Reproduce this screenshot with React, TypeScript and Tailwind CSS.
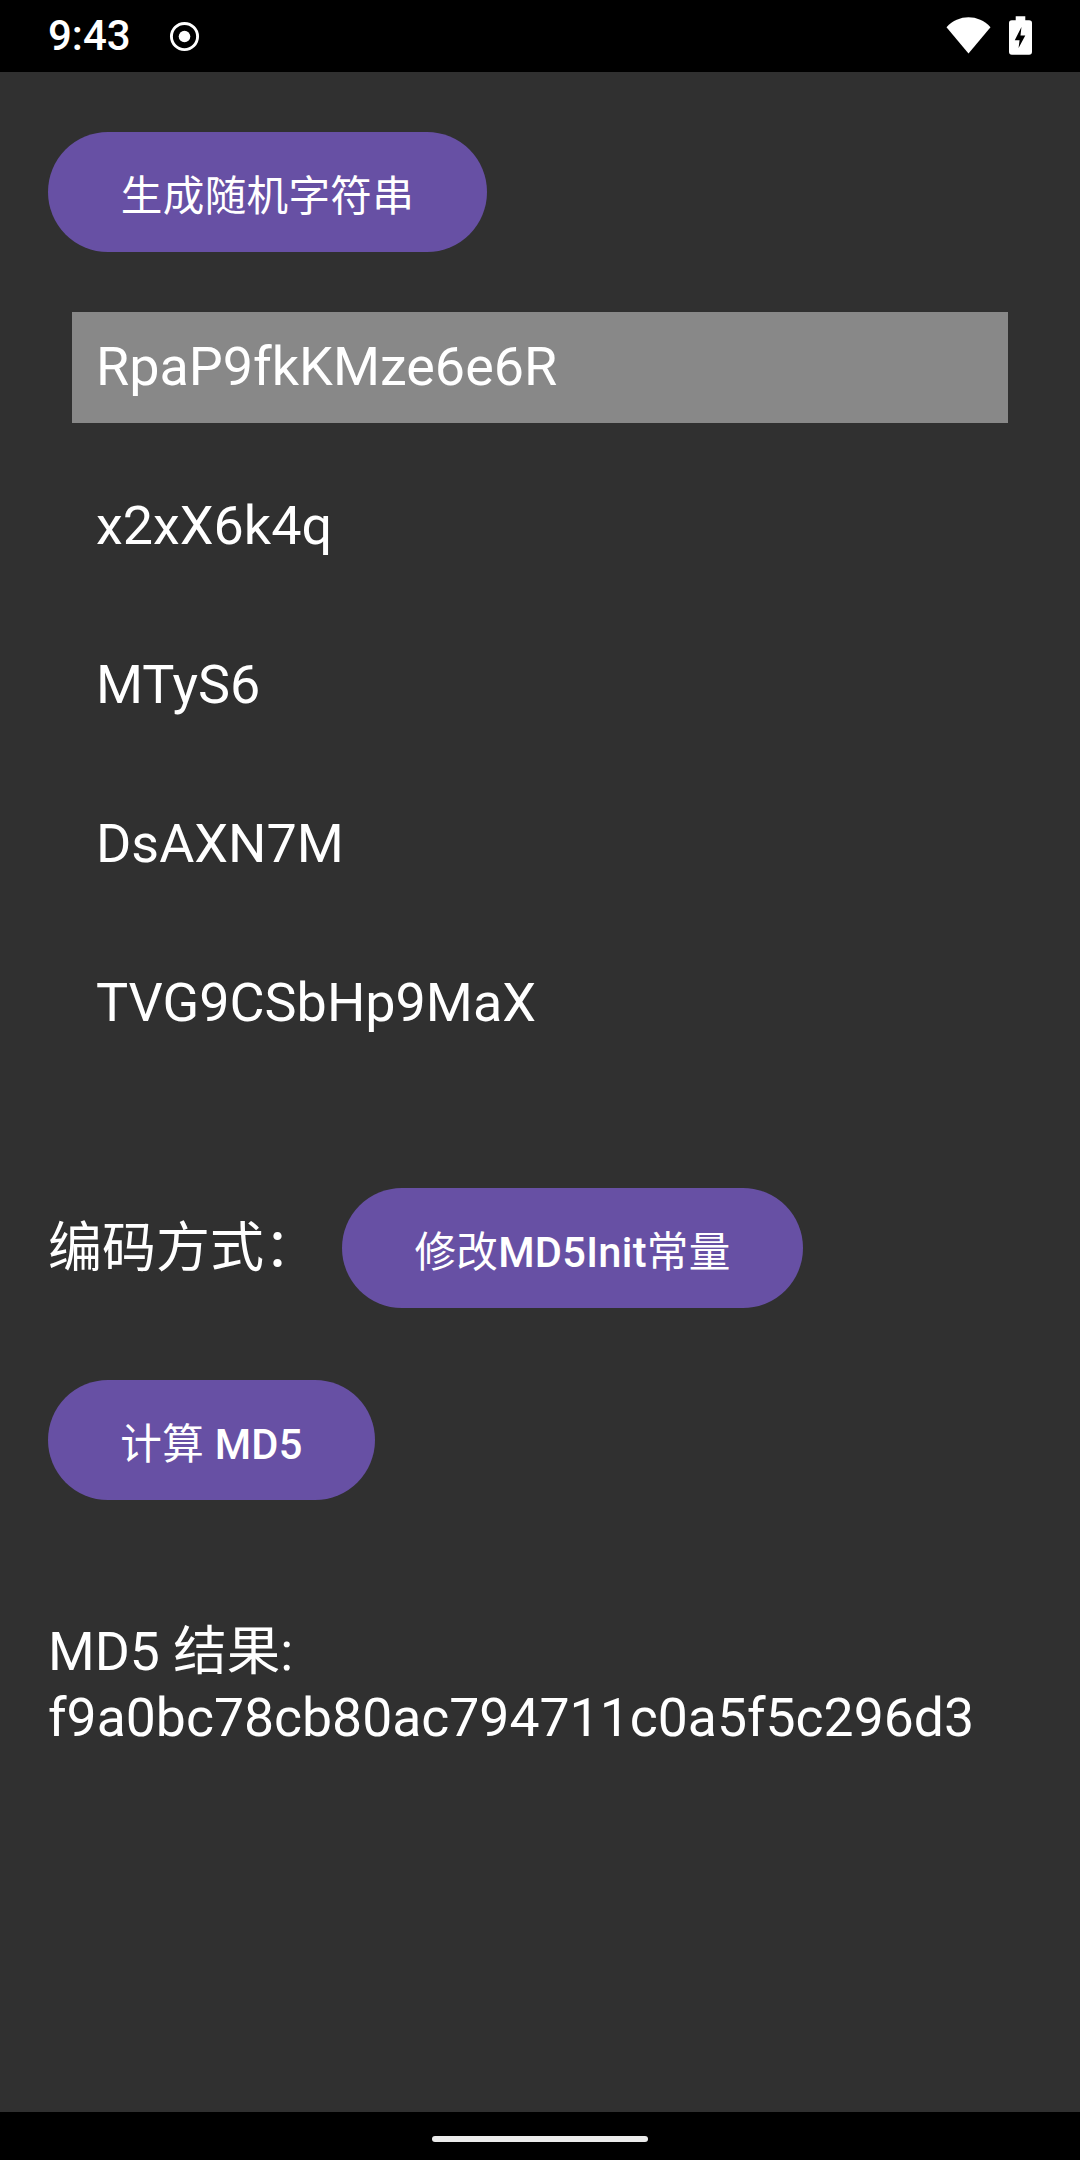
import type { ReactNode } from 'react';

const CJK = "font-['Roboto','Noto_Sans_CJK_SC',sans-serif]";

const strings = ['RpaP9fkKMze6e6R', 'x2xX6k4q', 'MTyS6', 'DsAXN7M', 'TVG9CSbHp9MaX'];

function PillButton({ children, className }: { children: ReactNode; className: string }) {
	return (
		<button
			className={`flex h-[120px] items-center justify-center rounded-[60px] bg-[#6750a4] pt-[10px] text-[41.6px] font-medium tracking-[0.3px] text-white ${className}`}
		>
			<span>{children}</span>
		</button>
	);
}

function Han({ children }: { children: ReactNode }) {
	return <span className="font-normal">{children}</span>;
}

function StatusBar() {
	return (
		<div className="flex h-[72px] items-center justify-between bg-black pl-[48px] pr-[48px]">
			<div className="flex items-center">
				<span className="text-[42px] font-medium leading-none text-white">9:43</span>
				<svg className="ml-[38px]" width="31" height="31" viewBox="0 0 32 32">
					<circle cx="16" cy="16" r="13.5" fill="none" stroke="#fff" strokeWidth="3" />
					<circle cx="16" cy="16" r="6" fill="#fff" />
				</svg>
			</div>
			<div className="flex items-center pb-[2px]">
				<svg width="45" height="38" viewBox="0 0 46 38">
					<path d="M0.5 11 C13 -2.5 33 -2.5 45.5 11 L23 38 Z" fill="#fff" />
				</svg>
				<svg className="ml-[18px]" width="23" height="39" viewBox="0 0 24 40">
					<path
						fillRule="evenodd"
						d="M7 0 H17 V4 H21 Q24 4 24 7 V37 Q24 40 21 40 H3 Q0 40 0 37 V7 Q0 4 3 4 H7 Z M13 11 L6 25 H11 L10 33 L17 20 H12 Z"
						fill="#fff"
					/>
				</svg>
			</div>
		</div>
	);
}

export default function App() {
	return (
		<div className={`flex h-[2160px] w-[1080px] flex-col bg-[#303030] text-white ${CJK}`}>
			<StatusBar />
			<main className="flex flex-1 flex-col px-[48px] pt-[60px]">
				<PillButton className="w-[439px]">
					<Han>生成随机字符串</Han>
				</PillButton>

				{/* string list */}
				<ul className="ml-[24px] mt-[60px] flex w-[936px] flex-col gap-[48px]">
					{strings.map((s, i) => (
						<li
							key={s}
							className={`flex h-[111px] items-center px-[24px] text-[53.9px] ${i === 0 ? 'bg-[#888888]' : ''}`}
						>
							{s}
						</li>
					))}
				</ul>

				<div className="mt-[129px] flex items-center">
					<span className="w-[294px] pt-[2px] text-[54px] leading-none">编码方式：</span>
					<PillButton className="w-[461px]">
						<Han>修改</Han>MD5Init<Han>常量</Han>
					</PillButton>
				</div>

				<PillButton className="mt-[72px] w-[327px]">
					<Han>计算</Han> MD5
				</PillButton>

				<p className="mt-[119px] text-[53.5px] leading-[66px]">
					MD5 结果:
					<br />
					f9a0bc78cb80ac794711c0a5f5c296d3
				</p>
			</main>
			<div className="flex h-[48px] items-start justify-center bg-black pt-[24px]">
				<div className="h-[6px] w-[216px] rounded-full bg-[#ebebeb]" />
			</div>
		</div>
	);
}
